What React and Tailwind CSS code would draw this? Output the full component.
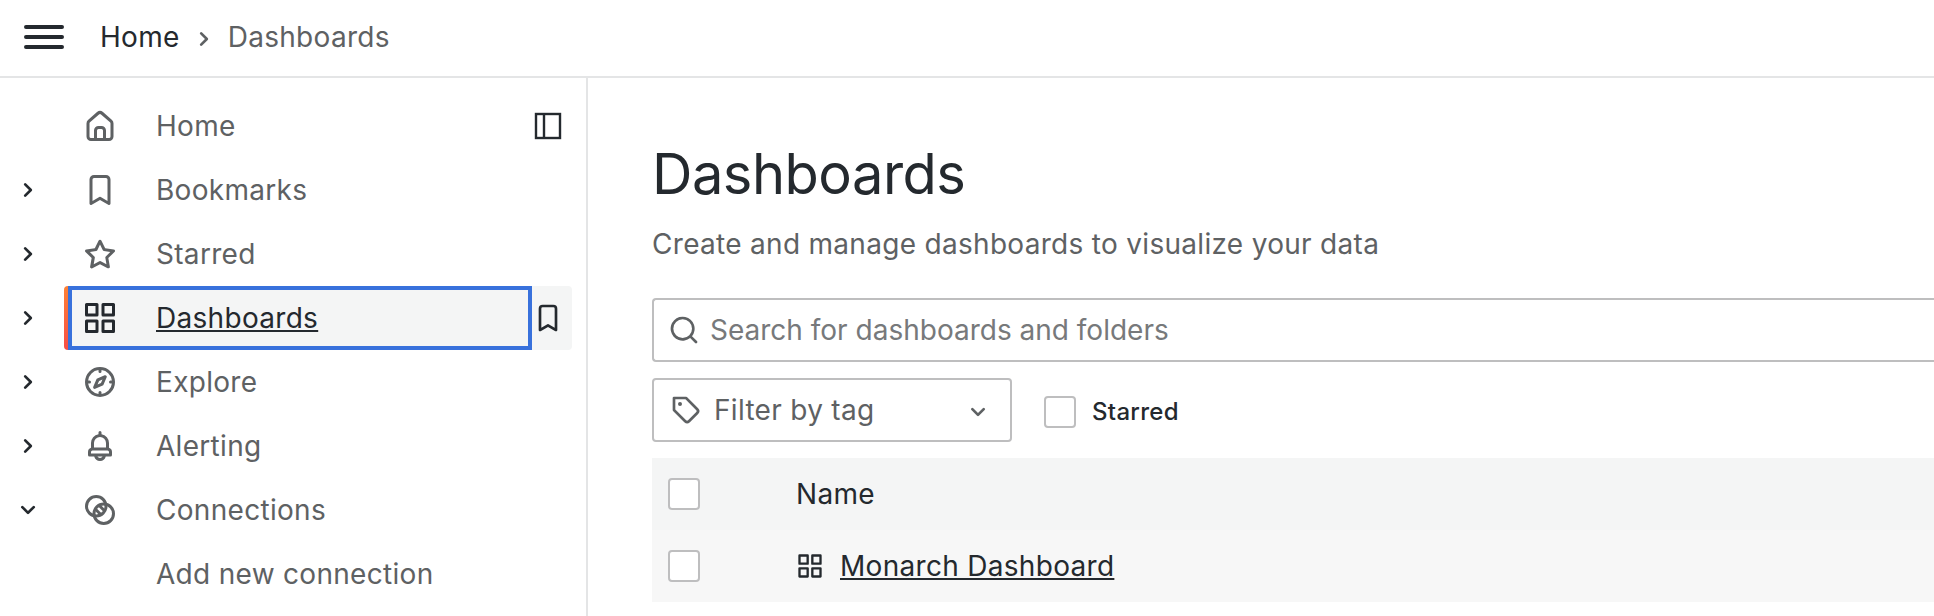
const ICONS = {
  bars: 'M3,8H21a1,1,0,0,0,0-2H3A1,1,0,0,0,3,8Zm18,8H3a1,1,0,0,0,0,2H21a1,1,0,0,0,0-2Zm0-5H3a1,1,0,0,0,0,2H21a1,1,0,0,0,0-2Z',
  angleRight:
    'M14.83,11.29,10.59,7.05a1,1,0,0,0-1.42,0,1,1,0,0,0,0,1.41L12.71,12,9.17,15.54a1,1,0,0,0,0,1.41,1,1,0,0,0,.71.29,1,1,0,0,0,.71-.29l4.24-4.24A1,1,0,0,0,14.83,11.29Z',
  angleDown:
    'M17,9.17a1,1,0,0,0-1.41,0L12,12.71,8.46,9.17a1,1,0,0,0-1.41,0,1,1,0,0,0,0,1.42l4.24,4.24a1,1,0,0,0,1.42,0L17,10.59A1,1,0,0,0,17,9.17Z',
  home: 'M20,8h0L14,2.74a3,3,0,0,0-4,0L4,8a3,3,0,0,0-1,2.26V19a3,3,0,0,0,3,3H18a3,3,0,0,0,3-3V10.25A3,3,0,0,0,20,8ZM14,20H10V15a1,1,0,0,1,1-1h2a1,1,0,0,1,1,1Zm5-1a1,1,0,0,1-1,1H16V15a3,3,0,0,0-3-3H11a3,3,0,0,0-3,3v5H6a1,1,0,0,1-1-1V10.25a1,1,0,0,1,.34-.75l6-5.25a1,1,0,0,1,1.32,0l6,5.25a1,1,0,0,1,.34.75Z',
  bookmark:
    'M16,2H8A3,3,0,0,0,5,5V21a1,1,0,0,0,.5.87,1,1,0,0,0,1,0L12,18.69l5.5,3.18A1,1,0,0,0,18,22a1,1,0,0,0,.5-.13A1,1,0,0,0,19,21V5A3,3,0,0,0,16,2Zm1,17.27-4.5-2.6a1,1,0,0,0-1,0L7,19.27V5A1,1,0,0,1,8,4h8a1,1,0,0,1,1,1Z',
  star: 'M22,9.67A1,1,0,0,0,21.14,9l-5.69-.83L12.9,3a1,1,0,0,0-1.8,0L8.55,8.16,2.86,9a1,1,0,0,0-.81.68,1,1,0,0,0,.25,1l4.13,4-1,5.68A1,1,0,0,0,6.9,21.44L12,18.77l5.1,2.67a.93.93,0,0,0,.46.12,1,1,0,0,0,.59-.19,1,1,0,0,0,.4-1l-1-5.68,4.13-4A1,1,0,0,0,22,9.67Zm-6.15,4a1,1,0,0,0-.29.88l.72,4.2-3.76-2a1.06,1.06,0,0,0-.94,0l-3.76,2,.72-4.2a1,1,0,0,0-.29-.88l-3-3,4.21-.61a1,1,0,0,0,.76-.55L12,5.7l1.88,3.82a1,1,0,0,0,.76.55l4.21.61Z',
  apps: 'M10,13H3a1,1,0,0,0-1,1v7a1,1,0,0,0,1,1h7a1,1,0,0,0,1-1V14A1,1,0,0,0,10,13ZM9,20H4V15H9ZM21,2H14a1,1,0,0,0-1,1v7a1,1,0,0,0,1,1h7a1,1,0,0,0,1-1V3A1,1,0,0,0,21,2ZM20,9H15V4h5Zm1,4H14a1,1,0,0,0-1,1v7a1,1,0,0,0,1,1h7a1,1,0,0,0,1-1V14A1,1,0,0,0,21,13Zm-1,7H15V15h5ZM10,2H3A1,1,0,0,0,2,3v7a1,1,0,0,0,1,1h7a1,1,0,0,0,1-1V3A1,1,0,0,0,10,2ZM9,9H4V4H9Z',
  compass:
    'M12,2A10,10,0,1,0,22,12,10,10,0,0,0,12,2Zm1,17.93V19a1,1,0,0,0-2,0v.93A8,8,0,0,1,4.07,13H5a1,1,0,0,0,0-2H4.07A8,8,0,0,1,11,4.07V5a1,1,0,0,0,2,0V4.07A8,8,0,0,1,19.93,11H19a1,1,0,0,0,0,2h.93A8,8,0,0,1,13,19.93ZM15.14,7.55l-5,2.12a1,1,0,0,0-.52.52l-2.12,5a1,1,0,0,0,.21,1.1,1,1,0,0,0,.7.3.93.93,0,0,0,.4-.09l5-2.12a1,1,0,0,0,.52-.52l2.12-5a1,1,0,0,0-1.31-1.31Zm-2.49,5.1-2.28,1,1-2.28,2.28-1Z',
  bell: 'M18,13.18V10a6,6,0,0,0-5-5.91V3a1,1,0,0,0-2,0V4.09A6,6,0,0,0,6,10v3.18A3,3,0,0,0,4,16v2a1,1,0,0,0,1,1H8.14a4,4,0,0,0,7.72,0H19a1,1,0,0,0,1-1V16A3,3,0,0,0,18,13.18ZM8,10a4,4,0,0,1,8,0v3H8Zm4,10a2,2,0,0,1-1.72-1h3.44A2,2,0,0,1,12,20Zm6-3H6V16a1,1,0,0,1,1-1H17a1,1,0,0,1,1,1Z',
  search:
    'M21.71,20.29,18,16.61A9,9,0,1,0,16.61,18l3.68,3.68a1,1,0,0,0,1.42,0A1,1,0,0,0,21.71,20.29ZM11,18a7,7,0,1,1,7-7A7,7,0,0,1,11,18Z',
  tag: 'M7.5,6A1.5,1.5,0,1,0,9,7.5,1.5,1.5,0,0,0,7.5,6Zm13.62,4.71L12.71,2.29A1,1,0,0,0,12,2H3A1,1,0,0,0,2,3v9a1,1,0,0,0,.29.71l8.42,8.41a3,3,0,0,0,4.24,0L21.12,15a3,3,0,0,0,0-4.24Zm-1.41,2.82h0l-6.18,6.17a1,1,0,0,1-1.41,0L4,11.59V4h7.59l8.12,8.12a1,1,0,0,1,.29.71A1,1,0,0,1,19.71,13.53Z',
};

function Icon({ name, className }) {
  return (
    <svg viewBox="0 0 24 24" fill="currentColor" className={'shrink-0 ' + className}>
      <path d={ICONS[name]} />
    </svg>
  );
}

function ConnectionsIcon({ className }) {
  return (
    <svg viewBox="0 0 24 24" fill="none" stroke="currentColor" strokeWidth="2" className={'shrink-0 ' + className}>
      <circle cx="9.5" cy="9.5" r="6.5" />
      <circle cx="14.5" cy="14.5" r="6.5" />
      <path d="M9.5 12l2.5 2.5M12 9.5l2.5 2.5" strokeLinecap="round" />
    </svg>
  );
}

function DockIcon({ className }) {
  return (
    <svg viewBox="0 0 28 28" fill="none" stroke="currentColor" strokeWidth="2.4" className={'shrink-0 ' + className}>
      <rect x="2" y="2" width="24" height="24" />
      <path d="M10 2v24" />
    </svg>
  );
}

const NAV = [
  { label: 'Home', icon: 'home' },
  { label: 'Bookmarks', icon: 'bookmark', arrow: 'angleRight' },
  { label: 'Starred', icon: 'star', arrow: 'angleRight' },
  { label: 'Dashboards', icon: 'apps', arrow: 'angleRight', active: true },
  { label: 'Explore', icon: 'compass', arrow: 'angleRight' },
  { label: 'Alerting', icon: 'bell', arrow: 'angleRight' },
  { label: 'Connections', icon: 'connections', arrow: 'angleDown' },
  { label: 'Add new connection' },
];

function NavIcon({ name }) {
  if (!name) return null;
  if (name === 'connections') return <ConnectionsIcon className="size-9" />;
  return <Icon name={name} className="size-9" />;
}

function NavItem({ item }) {
  return (
    <li className="flex h-16 items-center pl-3 pr-3.5">
      <span className="flex w-[52px] shrink-0 text-[#24292e]">
        {item.arrow && <Icon name={item.arrow} className="size-8" />}
      </span>
      {item.active ? (
        <div className="flex h-16 grow items-center overflow-hidden rounded bg-[#f4f5f5] text-[#24292e]">
          <span className="h-full w-1 bg-[linear-gradient(0deg,#f53e4c_-31.2%,#ff8833_113.07%)]" />
          <a className="flex h-full w-[464px] items-center border-4 border-[#3871dc] pl-2.5">
            <NavIcon name={item.icon} />
            <span className="pl-[38px] underline decoration-2 underline-offset-2">{item.label}</span>
          </a>
          <Icon name="bookmark" className="size-8" />
        </div>
      ) : (
        <div className="flex grow items-center text-[#5e6163]">
          <span className="flex w-[92px] pl-[18px]">
            <NavIcon name={item.icon} />
          </span>
          <span className="grow">{item.label}</span>
          {item.label === 'Home' && <DockIcon className="mr-2.5 size-7 text-[#24292e]" />}
        </div>
      )}
    </li>
  );
}

function Checkbox() {
  return <span className="size-8 shrink-0 rounded border-2 border-[#bebebf] bg-white" />;
}

export default function App() {
  return (
    <div className="flex h-[616px] w-full flex-col overflow-hidden bg-white font-['Inter',sans-serif] text-[28px] leading-[44px] tracking-[0.3px] text-[#24292e]">
      <header className="flex h-[78px] shrink-0 items-center border-b-2 border-[#e4e5e6] pb-0.5 pl-5">
        <Icon name="bars" className="size-12" />
        <nav className="flex items-center pl-8">
          <span>Home</span>
          <Icon name="angleRight" className="mx-2 mt-[3px] size-8 text-[#5e6163]" />
          <span className="text-[#5e6163]">Dashboards</span>
        </nav>
      </header>
      <div className="flex min-h-0 grow">
        <aside className="w-[588px] shrink-0 border-r-2 border-[#e4e5e6] pt-4">
          <ul>
            {NAV.map((item) => (
              <NavItem key={item.label} item={item} />
            ))}
          </ul>
        </aside>
        <main className="min-w-0 grow pl-16 pt-16">
          <h1 className="text-[56px] leading-[64px] tracking-[-0.5px]">Dashboards</h1>
          <p className="pt-4 text-[#5e6163]">Create and manage dashboards to visualize your data</p>
          <div className="mt-8 flex h-16 items-center rounded-l border-2 border-r-0 border-[#bebebf] pl-3.5">
            <Icon name="search" className="size-8 text-[#5e6163]" />
            <span className="pl-2.5 tracking-normal text-[#77797b]">Search for dashboards and folders</span>
          </div>
          <div className="mt-4 flex items-center">
            <div className="flex h-16 w-[360px] items-center rounded border-2 border-[#bebebf] pl-4 text-[#5e6163]">
              <Icon name="tag" className="size-8" />
              <span className="grow pl-3">Filter by tag</span>
              <Icon name="angleDown" className="mr-4 mt-1 size-8" />
            </div>
            <label className="flex items-center gap-4 pl-8 pt-1">
              <Checkbox />
              <span className="text-2xl font-medium">Starred</span>
            </label>
          </div>
          <div className="mt-4">
            <div className="flex h-18 items-center bg-[#f4f5f5] pl-4">
              <Checkbox />
              <span className="pl-24">Name</span>
            </div>
            <div className="flex h-18 items-center bg-[#f7f7f7] pl-4">
              <Checkbox />
              <Icon name="apps" className="ml-24 size-7" />
              <span className="ml-4 underline decoration-2 underline-offset-2">Monarch Dashboard</span>
            </div>
          </div>
        </main>
      </div>
    </div>
  );
}
